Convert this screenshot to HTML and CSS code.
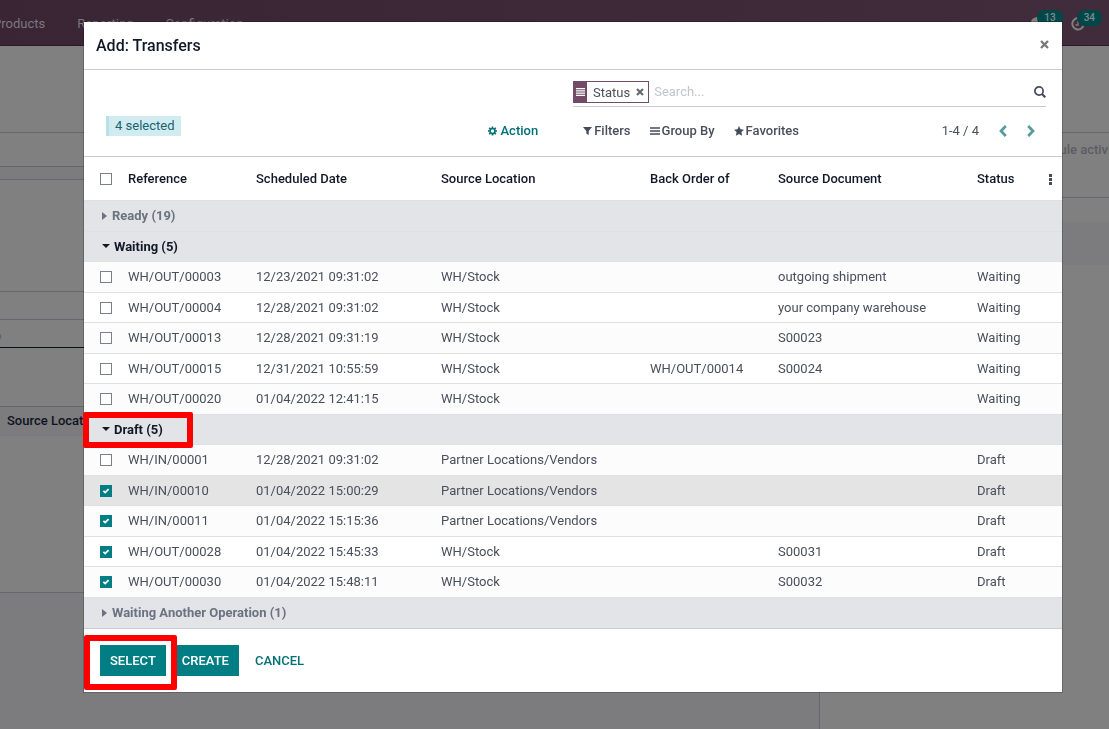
FILE: index.html
```html
<!DOCTYPE html>
<html lang="en">
<head>
<meta charset="utf-8">
<title>Add: Transfers</title>
<link rel="stylesheet" href="styles.css">
</head>
<body>
<div class="page" aria-hidden="true">
  <header class="navbar">
    <nav class="menu"><span>Products</span><span>Reporting</span><span>Configuration</span></nav>
    <div class="systray">
      <span class="tray-item">
        <svg width="14" height="13" viewBox="0 0 14 13"><path d="M7 0C3 0 0 2.300 0 5.200c0 1.800 1.200 3.300 2.900 4.200L2 12l3.500-1.800c5 .6 8.500-2 8.500-5C14 2.300 11 0 7 0z" fill="#7f7f7f"/></svg>
        <b class="badge">13</b>
      </span>
      <span class="tray-item">
        <svg width="14" height="14" viewBox="0 0 14 14"><g fill="none" stroke="#7f7f7f" stroke-width="2"><path d="M8.500 1.300A5.700 5.700 0 1 0 12.500 8.500"/><path d="M7 4v4H4.500" stroke-width="1.300"/></g></svg>
        <b class="badge">34</b>
      </span>
    </div>
  </header>
  <div class="content">
    <div class="form">
      <div class="block b1"></div>
      <div class="block b2"></div>
      <div class="block b3"></div>
      <div class="block b4"></div>
      <div class="block b5"></div>
      <div class="block b6">o</div>
      <div class="block b7"></div>
      <div class="block b8">Source Location</div>
      <div class="block b9"></div>
    </div>
    <aside class="chatter">
      <div class="block b1"></div>
      <div class="block activity">Schedule activity</div>
      <div class="block day"></div>
      <div class="block message"></div>
    </aside>
  </div>
</div>

<div class="overlay">
  <main class="modal" role="dialog" aria-labelledby="title">
    <header class="modal-header">
      <h1 id="title">Add: Transfers</h1>
      <button class="icon-btn close" aria-label="Close"><svg width="9" height="9" viewBox="0 0 9 9"><path d="M1 1l7 7M8 1L1 8" stroke="#777" stroke-width="2.300"/></svg></button>
    </header>

    <section class="control-panel">
      <div class="search">
        <span class="facet">
          <span class="facet-icon"><svg width="9" height="8" viewBox="0 0 9 8"><path d="M0 .6h9M0 2.900h9M0 5.100h9M0 7.400h9" stroke="#fff" stroke-width="1.200"/></svg></span>
          <span class="facet-label">Status</span>
          <button class="icon-btn" aria-label="Remove"><svg width="8" height="8" viewBox="0 0 8 8"><path d="M1 1l6 6M7 1L1 7" stroke="#666b76" stroke-width="2.200"/></svg></button>
        </span>
        <input type="text" placeholder="Search..." aria-label="Search">
        <button class="icon-btn" aria-label="Search"><svg width="12" height="12" viewBox="0 0 12 12" fill="none" stroke="#434a59"><circle cx="5" cy="5" r="4.100" stroke-width="1.700"/><path d="M8 8l3.300 3.300" stroke-width="2.200"/></svg></button>
      </div>
      <div class="tools">
        <span class="selected"><b>4</b> selected</span>
        <button class="tool action"><svg width="9" height="10" viewBox="0 0 10 10" fill="none" stroke="#017075"><circle cx="5" cy="5" r="2.800" stroke-width="1.900"/><path d="M5 0v1.600M5 8.400V10M0 5h1.600M8.400 5H10M1.400 1.400l1.200 1.200M7.400 7.400l1.200 1.200M8.600 1.400L7.400 2.600M2.600 7.400L1.400 8.600" stroke-width="1.800"/></svg>Action</button>
        <div class="filters">
          <button class="tool"><svg width="9" height="8" viewBox="0 0 9 8"><path d="M0 0h9L5.700 4v4L3.300 6.500V4z" fill="#434a59"/></svg>Filters</button>
          <button class="tool"><svg width="10" height="8" viewBox="0 0 10 8"><path d="M0 1h10M0 4h10M0 7h10" stroke="#434a59" stroke-width="1.400"/></svg>Group By</button>
          <button class="tool"><svg width="10" height="10" viewBox="0 0 10 10"><path d="M5 0l1.500 3.300 3.500.4-2.600 2.400.7 3.600L5 7.900 1.900 9.700l.7-3.600L0 3.700l3.500-.4z" fill="#434a59"/></svg>Favorites</button>
        </div>
        <div class="pager">
          <span>1-4 / 4</span>
          <button class="icon-btn" aria-label="Previous"><svg width="8" height="12" viewBox="0 0 8 12"><path d="M6.800 1L2 6l4.800 5" fill="none" stroke="#559a9c" stroke-width="2.700"/></svg></button>
          <button class="icon-btn" aria-label="Next"><svg width="8" height="12" viewBox="0 0 8 12"><path d="M1.200 1L6 6l-4.800 5" fill="none" stroke="#559a9c" stroke-width="2.700"/></svg></button>
        </div>
      </div>
    </section>

    <table class="list">
      <colgroup><col class="c-check"><col class="c-ref"><col class="c-date"><col class="c-loc"><col class="c-back"><col class="c-doc"><col class="c-status"><col class="c-more"></colgroup>
      <thead>
        <tr><th><input type="checkbox" aria-label="Select all"></th><th>Reference</th><th>Scheduled Date</th><th>Source Location</th><th>Back Order of</th><th>Source Document</th><th>Status</th><th class="more"><button class="icon-btn" aria-label="Optional columns"><svg width="3" height="11" viewBox="0 0 3 11"><path d="M0 0h3v3H0zM0 4h3v3H0zM0 8h3v3H0z" fill="#434a59"/></svg></button></th></tr>
      </thead>
      <tbody>
        <tr class="group"><th colspan="8"><i class="caret right"></i>Ready (19)</th></tr>
        <tr class="group open"><th colspan="8"><i class="caret down"></i>Waiting (5)</th></tr>
        <tr><td><input type="checkbox" aria-label="WH/OUT/00003"></td><td>WH/OUT/00003</td><td>12/23/2021 09:31:02</td><td>WH/Stock</td><td></td><td>outgoing shipment</td><td>Waiting</td><td></td></tr>
        <tr><td><input type="checkbox" aria-label="WH/OUT/00004"></td><td>WH/OUT/00004</td><td>12/28/2021 09:31:02</td><td>WH/Stock</td><td></td><td>your company warehouse</td><td>Waiting</td><td></td></tr>
        <tr><td><input type="checkbox" aria-label="WH/OUT/00013"></td><td>WH/OUT/00013</td><td>12/28/2021 09:31:19</td><td>WH/Stock</td><td></td><td>S00023</td><td>Waiting</td><td></td></tr>
        <tr><td><input type="checkbox" aria-label="WH/OUT/00015"></td><td>WH/OUT/00015</td><td>12/31/2021 10:55:59</td><td>WH/Stock</td><td>WH/OUT/00014</td><td>S00024</td><td>Waiting</td><td></td></tr>
        <tr><td><input type="checkbox" aria-label="WH/OUT/00020"></td><td>WH/OUT/00020</td><td>01/04/2022 12:41:15</td><td>WH/Stock</td><td></td><td></td><td>Waiting</td><td></td></tr>
        <tr class="group open"><th colspan="8"><i class="caret down"></i>Draft (5)<span class="mark mark-group"></span></th></tr>
        <tr><td><input type="checkbox" aria-label="WH/IN/00001"></td><td>WH/IN/00001</td><td>12/28/2021 09:31:02</td><td>Partner Locations/Vendors</td><td></td><td></td><td>Draft</td><td></td></tr>
        <tr class="hover"><td><input type="checkbox" checked aria-label="WH/IN/00010"></td><td>WH/IN/00010</td><td>01/04/2022 15:00:29</td><td>Partner Locations/Vendors</td><td></td><td></td><td>Draft</td><td></td></tr>
        <tr><td><input type="checkbox" checked aria-label="WH/IN/00011"></td><td>WH/IN/00011</td><td>01/04/2022 15:15:36</td><td>Partner Locations/Vendors</td><td></td><td></td><td>Draft</td><td></td></tr>
        <tr><td><input type="checkbox" checked aria-label="WH/OUT/00028"></td><td>WH/OUT/00028</td><td>01/04/2022 15:45:33</td><td>WH/Stock</td><td></td><td>S00031</td><td>Draft</td><td></td></tr>
        <tr><td><input type="checkbox" checked aria-label="WH/OUT/00030"></td><td>WH/OUT/00030</td><td>01/04/2022 15:48:11</td><td>WH/Stock</td><td></td><td>S00032</td><td>Draft</td><td></td></tr>
        <tr class="group"><th colspan="8"><i class="caret right"></i>Waiting Another Operation (1)</th></tr>
      </tbody>
    </table>

    <footer class="modal-footer">
      <button class="btn primary">SELECT</button>
      <button class="btn primary">CREATE</button>
      <button class="btn link">CANCEL</button>
      <span class="mark mark-select"></span>
    </footer>
  </main>
</div>
</body>
</html>
```
FILE: styles.css
```css
* { box-sizing: border-box; }
body {
  margin: 0;
  font: 13px/20px Roboto, "Noto Sans", sans-serif;
  color: #4a4f5c;
  background: #7c7c7e;
}
button, input { font: inherit; color: inherit; }
button { border: 0; background: none; padding: 0; cursor: pointer; }
svg { display: block; flex: none; }

/* Dimmed page behind the dialog */
.page { position: fixed; inset: 0; display: flex; flex-direction: column; overflow: hidden; }
.navbar {
  flex: none;
  height: 46px;
  display: flex;
  justify-content: space-between;
  align-items: center;
  background: linear-gradient(100deg, #392533, #402c3a);
  border-bottom: 1px solid #2b1a26;
  color: #7d7780;
}
.menu { display: flex; gap: 32px; margin-left: -7px; padding-top: 2px; }
.systray { display: flex; gap: 8px; padding: 2px 7px 0 0; }
.tray-item { display: flex; align-items: center; }
.badge {
  margin: -12px 0 0 -8px;
  padding: 0 7px;
  border-radius: 8px;
  background: #00474a;
  color: #7f8a8c;
  font-size: 10px;
  line-height: 16px;
  font-weight: 500;
}
.content { flex: 1; display: flex; }
.form { flex: 820; border-right: 1px solid #66676e; background: #7c7c7e; }
.chatter { flex: 289; background: #808080; color: #5b5d62; overflow: hidden; }
.block { background: #808080; border-bottom: 1px solid #66676e; }
.b1 { height: 87px; }
.b2 { height: 34px; }
.b3 { height: 13px; background: #7c7c7e; }
.b4 { height: 112px; }
.b5 { height: 28px; }
.b6 { height: 28px; border-color: #0a0e1a; text-indent: -6px; line-height: 32px; color: #55565c; }
.b7 { height: 59px; }
.b8 { height: 29px; padding-left: 7px; line-height: 28px; font-weight: 500; color: #0f1320; background: #7c7c7e; border-color: #7a7a7a; }
.b9 { height: 157px; }
.activity { height: 65px; padding: 7px 0 0 203px; white-space: nowrap; font-weight: 500; }
.day { height: 25px; border-color: #7c7c7e; }
.message { height: 42px; background: #7c7c7e; border-color: #7c7c7e; }

/* Dialog */
.overlay { position: relative; padding: 22px 47px 36px 84px; }
.modal { background: #fff; box-shadow: 0 0 0 1px rgba(0, 0, 0, .2); }
.modal-header {
  height: 48px;
  display: flex;
  align-items: center;
  justify-content: space-between;
  padding: 0 13px 0 12px;
  border-bottom: 1px solid #c9ccd2;
}
.close { padding-bottom: 2px; }
h1 { margin: 0; font-size: 16px; font-weight: 500; color: #111827; }
.icon-btn { display: flex; align-items: center; }

.control-panel { padding: 11px 16px 15px; border-bottom: 1px solid #c9ccd2; }
.search {
  height: 26px;
  margin-left: 473px;
  display: flex;
  align-items: flex-start;
  border-bottom: 1px solid #c9ccd2;
}
.search > .icon-btn { height: 22px; }
.search input { flex: 1; min-width: 0; height: 21px; border: 0; padding: 0 5px; background: none; outline: 0; }
.search input::placeholder { color: #c2c5cb; }
.facet { height: 22px; display: flex; align-items: center; border: 1px solid #714b67; padding-right: 4px; }
.facet-icon { align-self: stretch; display: flex; align-items: center; padding: 0 2px; background: #714b67; }
.facet-label { padding: 2px 6px 0; }
.tools { height: 34px; display: flex; align-items: center; padding: 14px 0 0 6px; }
.selected {
  margin-top: -10px;
  padding: 0 7px 0 6px;
  border-left: 3px solid #b8e2e8;
  background: #d1ecf0;
  color: #1c6270;
}
.selected b { font-weight: 400; }
.tool { display: flex; align-items: center; gap: 3px; font-weight: 500; }
.action { color: #017075; margin-left: 307px; }
.filters { display: flex; gap: 19px; margin-left: 45px; }
.filters .tool { gap: 2px; }
.pager { display: flex; align-items: center; gap: 20px; margin-left: auto; padding-right: 11px; }

/* List */
.list { width: 100%; table-layout: fixed; border-collapse: separate; border-spacing: 0; }
.c-check { width: 40px; }
.c-ref { width: 128px; }
.c-date { width: 185px; }
.c-loc { width: 209px; }
.c-back { width: 128px; }
.c-doc { width: 199px; }
.c-status { width: 68px; }
.c-more { width: 21px; }
.list th, .list td { padding: 0 4px; text-align: left; white-space: nowrap; border-bottom: 1px solid #dee0e3; }
.list th:first-child, .list td:first-child { padding-left: 16px; }
.list thead th { height: 44px; font-weight: 500; color: #111827; }
.list .more { padding: 2px 0 0 8px; }
.list tbody tr { height: 30px; }
.list tbody tr:nth-child(odd) { height: 31px; background: #fcfcfc; }
.list tbody tr.hover { background: #e4e4e4; }
.list tbody tr.group { background: #e2e4e8; }
.list tbody tr:last-child th { border-bottom: 0; }
.group th { position: relative; font-weight: 700; color: #6b7280; }
.group.open th { color: #111827; }
.caret { display: inline-block; border: 0 solid transparent; }
.caret.right { margin: 0 5px 0 2px; border-left-color: currentColor; border-width: 4px 0 4px 5px; }
.caret.down { margin: 0 4px 0 2px; vertical-align: 3px; border-top-color: currentColor; border-width: 4px 4px 0; }
input[type="checkbox"] {
  appearance: none;
  display: block;
  width: 12px;
  height: 12px;
  margin: 0;
  border: 1px solid #7c7f8e;
  background: #fff;
}
input[type="checkbox"]:checked {
  border-color: #017e84;
  background: #017e84 url("data:image/svg+xml,%3Csvg xmlns='http://www.w3.org/2000/svg' viewBox='0 0 10 10'%3E%3Cpath d='M2.400 4.800l1.800 1.800 3.400-3.400' fill='none' stroke='white' stroke-width='1.800'/%3E%3C/svg%3E");
}

.modal-footer { position: relative; display: flex; gap: 6px; padding: 16px; border-top: 1px solid #c9ccd2; }
.btn { height: 31px; padding: 0 10px; font-weight: 500; }
.primary { background: #017e84; color: #fff; }
.link { color: #017075; }

/* Annotation frames */
.mark { position: absolute; border: 6px solid #f00; border-radius: 2px; pointer-events: none; }
.mark-group { left: -1px; top: -3px; width: 110px; height: 36px; }
.mark-select { left: 0; top: 6px; width: 93px; height: 55px; }
```
